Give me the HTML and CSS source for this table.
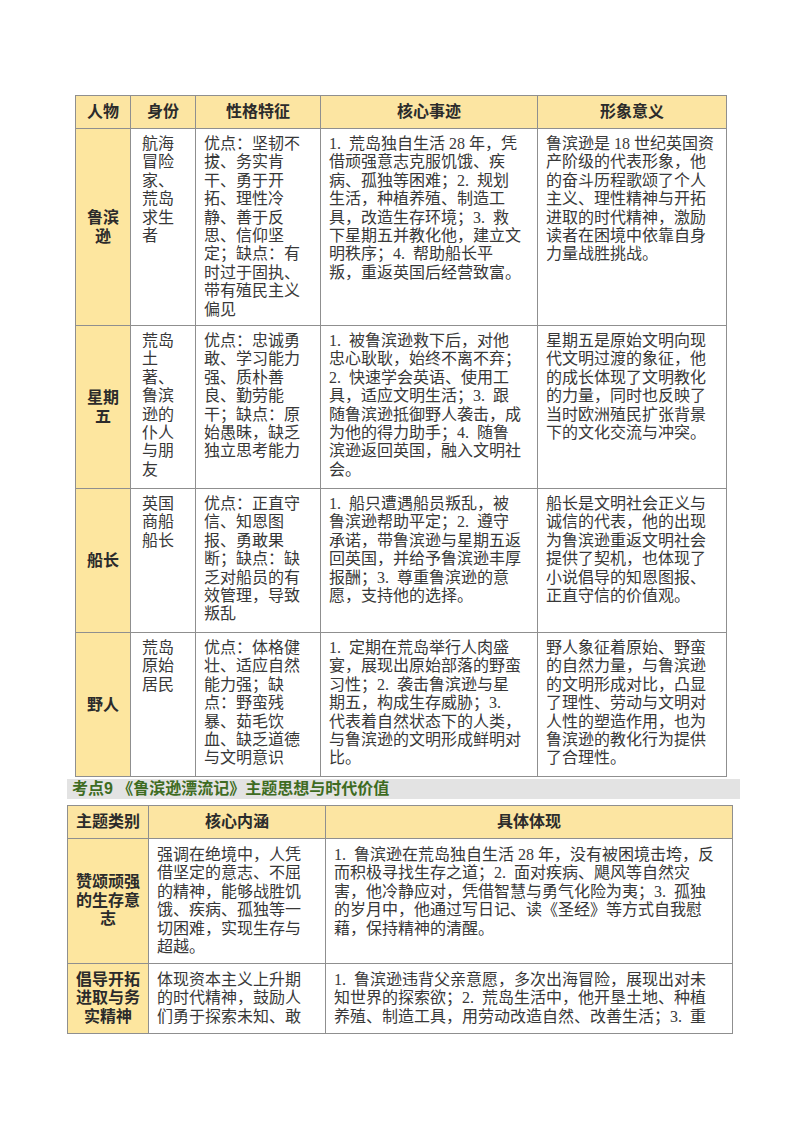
FILE: index.html
```html
<!DOCTYPE html>
<html lang="zh-CN">
<head>
<meta charset="utf-8">
<title>鲁滨逊漂流记</title>
<link rel="stylesheet" href="styles.css">
</head>
<body>
<div class="page">
  <table class="grid t1">
    <colgroup>
      <col class="c1"><col class="c2"><col class="c3"><col class="c4"><col class="c5">
    </colgroup>
    <thead>
      <tr class="head">
        <th>人物</th><th>身份</th><th>性格特征</th><th>核心事迹</th><th>形象意义</th>
      </tr>
    </thead>
    <tbody>
      <tr class="r1">
        <td class="name">鲁滨<br>逊</td>
        <td class="narrow">航海<br>冒险<br>家、<br>荒岛<br>求生<br>者</td>
        <td>优点：坚韧不<br>拔、务实肯<br>干、勇于开<br>拓、理性冷<br>静、善于反<br>思、信仰坚<br>定；缺点：有<br>时过于固执、<br>带有殖民主义<br>偏见</td>
        <td>1.&ensp;荒岛独自生活 28 年，凭<br>借顽强意志克服饥饿、疾<br>病、孤独等困难；2.&ensp;规划<br>生活，种植养殖、制造工<br>具，改造生存环境；3.&ensp;救<br>下星期五并教化他，建立文<br>明秩序；4.&ensp;帮助船长平<br>叛，重返英国后经营致富。</td>
        <td>鲁滨逊是 18 世纪英国资<br>产阶级的代表形象，他<br>的奋斗历程歌颂了个人<br>主义、理性精神与开拓<br>进取的时代精神，激励<br>读者在困境中依靠自身<br>力量战胜挑战。</td>
      </tr>
      <tr class="r2">
        <td class="name">星期<br>五</td>
        <td class="narrow">荒岛<br>土<br>著、<br>鲁滨<br>逊的<br>仆人<br>与朋<br>友</td>
        <td>优点：忠诚勇<br>敢、学习能力<br>强、质朴善<br>良、勤劳能<br>干；缺点：原<br>始愚昧，缺乏<br>独立思考能力</td>
        <td>1.&ensp;被鲁滨逊救下后，对他<br>忠心耿耿，始终不离不弃；<br>2.&ensp;快速学会英语、使用工<br>具，适应文明生活；3.&ensp;跟<br>随鲁滨逊抵御野人袭击，成<br>为他的得力助手；4.&ensp;随鲁<br>滨逊返回英国，融入文明社<br>会。</td>
        <td>星期五是原始文明向现<br>代文明过渡的象征，他<br>的成长体现了文明教化<br>的力量，同时也反映了<br>当时欧洲殖民扩张背景<br>下的文化交流与冲突。</td>
      </tr>
      <tr class="r3">
        <td class="name">船长</td>
        <td class="narrow">英国<br>商船<br>船长</td>
        <td>优点：正直守<br>信、知恩图<br>报、勇敢果<br>断；缺点：缺<br>乏对船员的有<br>效管理，导致<br>叛乱</td>
        <td>1.&ensp;船只遭遇船员叛乱，被<br>鲁滨逊帮助平定；2.&ensp;遵守<br>承诺，带鲁滨逊与星期五返<br>回英国，并给予鲁滨逊丰厚<br>报酬；3.&ensp;尊重鲁滨逊的意<br>愿，支持他的选择。</td>
        <td>船长是文明社会正义与<br>诚信的代表，他的出现<br>为鲁滨逊重返文明社会<br>提供了契机，也体现了<br>小说倡导的知恩图报、<br>正直守信的价值观。</td>
      </tr>
      <tr class="r4">
        <td class="name">野人</td>
        <td class="narrow">荒岛<br>原始<br>居民</td>
        <td>优点：体格健<br>壮、适应自然<br>能力强；缺<br>点：野蛮残<br>暴、茹毛饮<br>血、缺乏道德<br>与文明意识</td>
        <td>1.&ensp;定期在荒岛举行人肉盛<br>宴，展现出原始部落的野蛮<br>习性；2.&ensp;袭击鲁滨逊与星<br>期五，构成生存威胁；3.<br>代表着自然状态下的人类，<br>与鲁滨逊的文明形成鲜明对<br>比。</td>
        <td>野人象征着原始、野蛮<br>的自然力量，与鲁滨逊<br>的文明形成对比，凸显<br>了理性、劳动与文明对<br>人性的塑造作用，也为<br>鲁滨逊的教化行为提供<br>了合理性。</td>
      </tr>
    </tbody>
  </table>

  <h2 class="section">考点9 《鲁滨逊漂流记》主题思想与时代价值</h2>

  <table class="grid t2">
    <colgroup>
      <col class="d1"><col class="d2"><col class="d3">
    </colgroup>
    <thead>
      <tr class="head">
        <th>主题类别</th><th>核心内涵</th><th>具体体现</th>
      </tr>
    </thead>
    <tbody>
      <tr class="s1">
        <td class="name">赞颂顽强<br>的生存意<br>志</td>
        <td>强调在绝境中，人凭<br>借坚定的意志、不屈<br>的精神，能够战胜饥<br>饿、疾病、孤独等一<br>切困难，实现生存与<br>超越。</td>
        <td>1.&ensp;鲁滨逊在荒岛独自生活 28 年，没有被困境击垮，反<br>而积极寻找生存之道；2.&ensp;面对疾病、飓风等自然灾<br>害，他冷静应对，凭借智慧与勇气化险为夷；3.&ensp;孤独<br>的岁月中，他通过写日记、读《圣经》等方式自我慰<br>藉，保持精神的清醒。</td>
      </tr>
      <tr class="s2">
        <td class="name">倡导开拓<br>进取与务<br>实精神</td>
        <td>体现资本主义上升期<br>的时代精神，鼓励人<br>们勇于探索未知、敢</td>
        <td>1.&ensp;鲁滨逊违背父亲意愿，多次出海冒险，展现出对未<br>知世界的探索欲；2.&ensp;荒岛生活中，他开垦土地、种植<br>养殖、制造工具，用劳动改造自然、改善生活；3.&ensp;重</td>
      </tr>
    </tbody>
  </table>
</div>
</body>
</html>
```

FILE: styles.css
```css
html, body {
  margin: 0;
  padding: 0;
  background: #ffffff;
}

.page {
  width: 800px;
  height: 1132px;
  padding-top: 95px;
  box-sizing: border-box;
  font-family: "Liberation Serif", "Noto Sans CJK SC", serif;
  color: #383838;
  font-size: 16px;
}

.grid {
  border-collapse: collapse;
  table-layout: fixed;
}

.grid th,
.grid td {
  border: 1px solid #8f8f8f;
  padding: 0 8px;
  white-space: nowrap;
  overflow: hidden;
}

.grid td {
  vertical-align: top;
  line-height: 18.4px;
  padding-top: 6px;
  font-weight: 400;
}

.grid .head th {
  background: #fce5a2;
  font-family: "Liberation Sans", "Noto Sans CJK SC", sans-serif;
  font-weight: 700;
  font-size: 16px;
  color: #2b2b2b;
  text-align: center;
  vertical-align: middle;
  line-height: 20px;
}

.grid td.name {
  background: #fde69f;
  font-family: "Liberation Sans", "Noto Sans CJK SC", sans-serif;
  font-weight: 700;
  color: #2b2b2b;
  text-align: center;
  vertical-align: middle;
  line-height: 19px;
  padding: 0 4px;
}

.grid td.narrow {
  padding-left: 11px;
  padding-right: 4px;
}

/* table 1 */
.t1 {
  margin-left: 75px;
  width: 651px;
}
.t1 .c1 { width: 55px; }
.t1 .c2 { width: 65px; }
.t1 .c3 { width: 125px; }
.t1 .c4 { width: 217px; }
.t1 .c5 { width: 189px; }

.t1 .head { height: 33px; }
.t1 .r1 { height: 197px; }
.t1 .r2 { height: 163px; }
.t1 .r3 { height: 144px; }
.t1 .r4 { height: 144px; }

/* section heading */
.section {
  margin: 2px 0 0 67px;
  width: 673px;
  height: 20px;
  background: #e3e3e3;
  color: #3e6b22;
  font-family: "Liberation Sans", "Noto Sans CJK SC", sans-serif;
  font-weight: 700;
  font-size: 16px;
  line-height: 20px;
  padding-left: 5px;
  box-sizing: border-box;
}

/* table 2 */
.t2 {
  margin: 6px 0 0 67px;
  width: 665px;
}
.t2 .d1 { width: 81px; }
.t2 .d2 { width: 177px; }
.t2 .d3 { width: 407px; }

.t2 .head { height: 33px; }
.t2 td { padding-top: 7px; }
.t2 td.name { padding-top: 0; line-height: 18.5px; }
.t2 .s1 { height: 125px; }
.t2 .s2 { height: 70px; }
```
